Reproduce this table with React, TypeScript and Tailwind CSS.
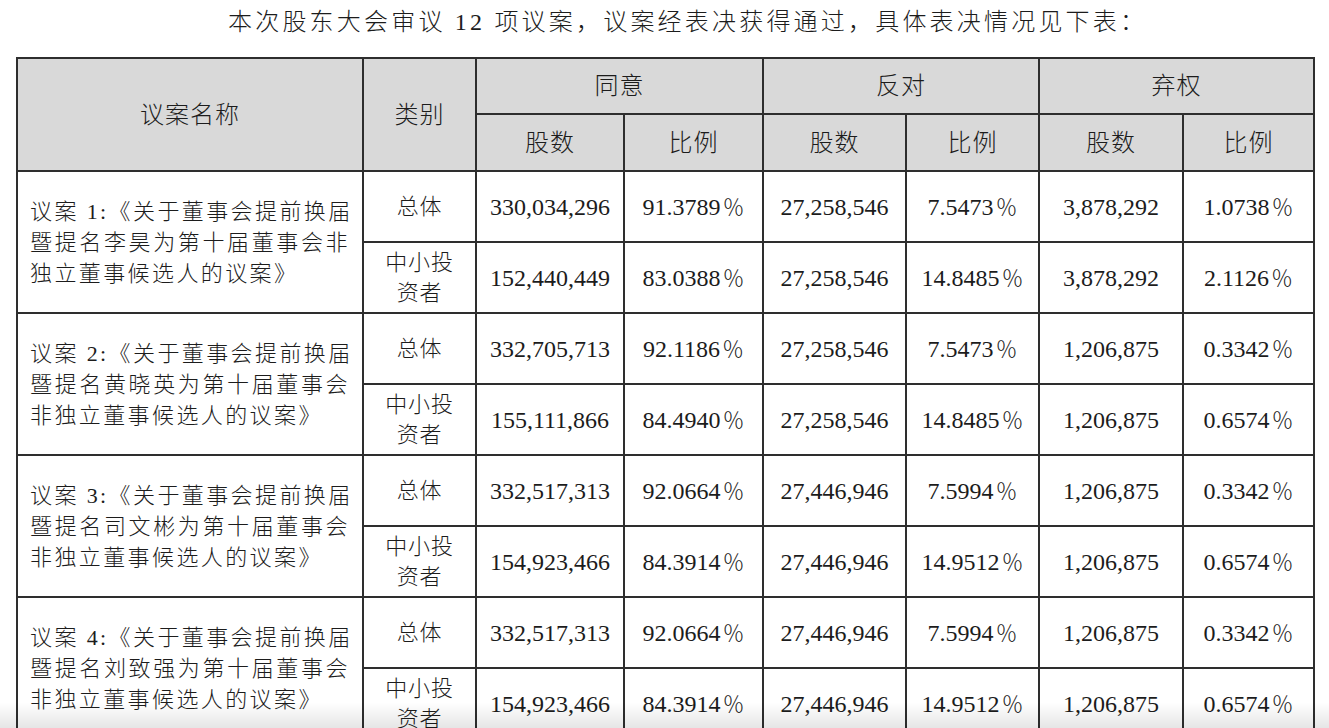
import React from 'react';

type Row = {
  category: 'total' | 'small';
  agreeShares: string;
  agreeRatio: string;
  againstShares: string;
  againstRatio: string;
  abstainShares: string;
  abstainRatio: string;
};

type Proposal = {
  lines: string[];
  rows: Row[];
};

const sameAs3: Row[] = [
  { category: 'total', agreeShares: '332,517,313', agreeRatio: '92.0664', againstShares: '27,446,946', againstRatio: '7.5994', abstainShares: '1,206,875', abstainRatio: '0.3342' },
  { category: 'small', agreeShares: '154,923,466', agreeRatio: '84.3914', againstShares: '27,446,946', againstRatio: '14.9512', abstainShares: '1,206,875', abstainRatio: '0.6574' },
];

const proposals: Proposal[] = [
  {
    lines: ['议案 1:《关于董事会提前换届', '暨提名李昊为第十届董事会非', '独立董事候选人的议案》'],
    rows: [
      { category: 'total', agreeShares: '330,034,296', agreeRatio: '91.3789', againstShares: '27,258,546', againstRatio: '7.5473', abstainShares: '3,878,292', abstainRatio: '1.0738' },
      { category: 'small', agreeShares: '152,440,449', agreeRatio: '83.0388', againstShares: '27,258,546', againstRatio: '14.8485', abstainShares: '3,878,292', abstainRatio: '2.1126' },
    ],
  },
  {
    lines: ['议案 2:《关于董事会提前换届', '暨提名黄晓英为第十届董事会', '非独立董事候选人的议案》'],
    rows: [
      { category: 'total', agreeShares: '332,705,713', agreeRatio: '92.1186', againstShares: '27,258,546', againstRatio: '7.5473', abstainShares: '1,206,875', abstainRatio: '0.3342' },
      { category: 'small', agreeShares: '155,111,866', agreeRatio: '84.4940', againstShares: '27,258,546', againstRatio: '14.8485', abstainShares: '1,206,875', abstainRatio: '0.6574' },
    ],
  },
  {
    lines: ['议案 3:《关于董事会提前换届', '暨提名司文彬为第十届董事会', '非独立董事候选人的议案》'],
    rows: sameAs3,
  },
  {
    lines: ['议案 4:《关于董事会提前换届', '暨提名刘致强为第十届董事会', '非独立董事候选人的议案》'],
    rows: sameAs3,
  },
];

const cell = 'border-2 border-[#2e2e2e] text-center align-middle p-0';
const head = cell + ' bg-[#d9d9d9] text-[24px] tracking-[1px] font-light';
const num = cell + ' text-[24px]';

const Ratio: React.FC<{ value: string }> = ({ value }) => (
  <span>
    {value}
    <span className="ml-[2px] text-[22px]">％</span>
  </span>
);

export default function App() {
  return (
    <div className="relative min-h-screen bg-white text-[#1c1c1c] font-light [font-family:'Liberation_Serif','Noto_Sans_CJK_SC',serif]">
      <div className="h-[57px] pl-[228px] pt-[6px] text-[24px] leading-[32px] tracking-[3.2px] whitespace-nowrap">
        本次股东大会审议 12 项议案，议案经表决获得通过，具体表决情况见下表：
      </div>

      <table className="ml-[16px] w-[1299px] table-fixed border-collapse">
        <colgroup>
          <col className="w-[346px]" />
          <col className="w-[113px]" />
          <col className="w-[148px]" />
          <col className="w-[139px]" />
          <col className="w-[143px]" />
          <col className="w-[133px]" />
          <col className="w-[144px]" />
          <col className="w-[131px]" />
        </colgroup>
        <thead>
          <tr className="h-[56px]">
            <th rowSpan={2} className={head}>议案名称</th>
            <th rowSpan={2} className={head}>类别</th>
            <th colSpan={2} className={head}>同意</th>
            <th colSpan={2} className={head}>反对</th>
            <th colSpan={2} className={head}>弃权</th>
          </tr>
          <tr className="h-[57px]">
            <th className={head}>股数</th>
            <th className={head}>比例</th>
            <th className={head}>股数</th>
            <th className={head}>比例</th>
            <th className={head}>股数</th>
            <th className={head}>比例</th>
          </tr>
        </thead>
        <tbody>
          {proposals.map((p, i) =>
            p.rows.map((r, j) => (
              <tr key={`${i}-${j}`} className="h-[71px]">
                {j === 0 && (
                  <td rowSpan={2} className={cell + ' text-left px-[12px] text-[22px] leading-[31px] tracking-[2.4px]'}>
                    {p.lines.map((line, k) => (
                      <div
                        key={k}
                        className={
                          k < p.lines.length - 1
                            ? 'whitespace-nowrap [text-align-last:justify]'
                            : 'whitespace-nowrap'
                        }
                      >
                        {line}
                      </div>
                    ))}
                  </td>
                )}
                <td className={cell + ' text-[22px] leading-[30px] tracking-[0.8px]'}>
                  {r.category === 'total' ? (
                    '总体'
                  ) : (
                    <>
                      <div>中小投</div>
                      <div>资者</div>
                    </>
                  )}
                </td>
                <td className={num}>{r.agreeShares}</td>
                <td className={num}><Ratio value={r.agreeRatio} /></td>
                <td className={num}>{r.againstShares}</td>
                <td className={num}><Ratio value={r.againstRatio} /></td>
                <td className={num}>{r.abstainShares}</td>
                <td className={num}><Ratio value={r.abstainRatio} /></td>
              </tr>
            ))
          )}
        </tbody>
      </table>

      {/* soft fade at the bottom edge of the viewer */}
      <div className="pointer-events-none fixed bottom-0 left-0 right-0 h-[26px] bg-gradient-to-b from-transparent to-black/10" />
    </div>
  );
}
